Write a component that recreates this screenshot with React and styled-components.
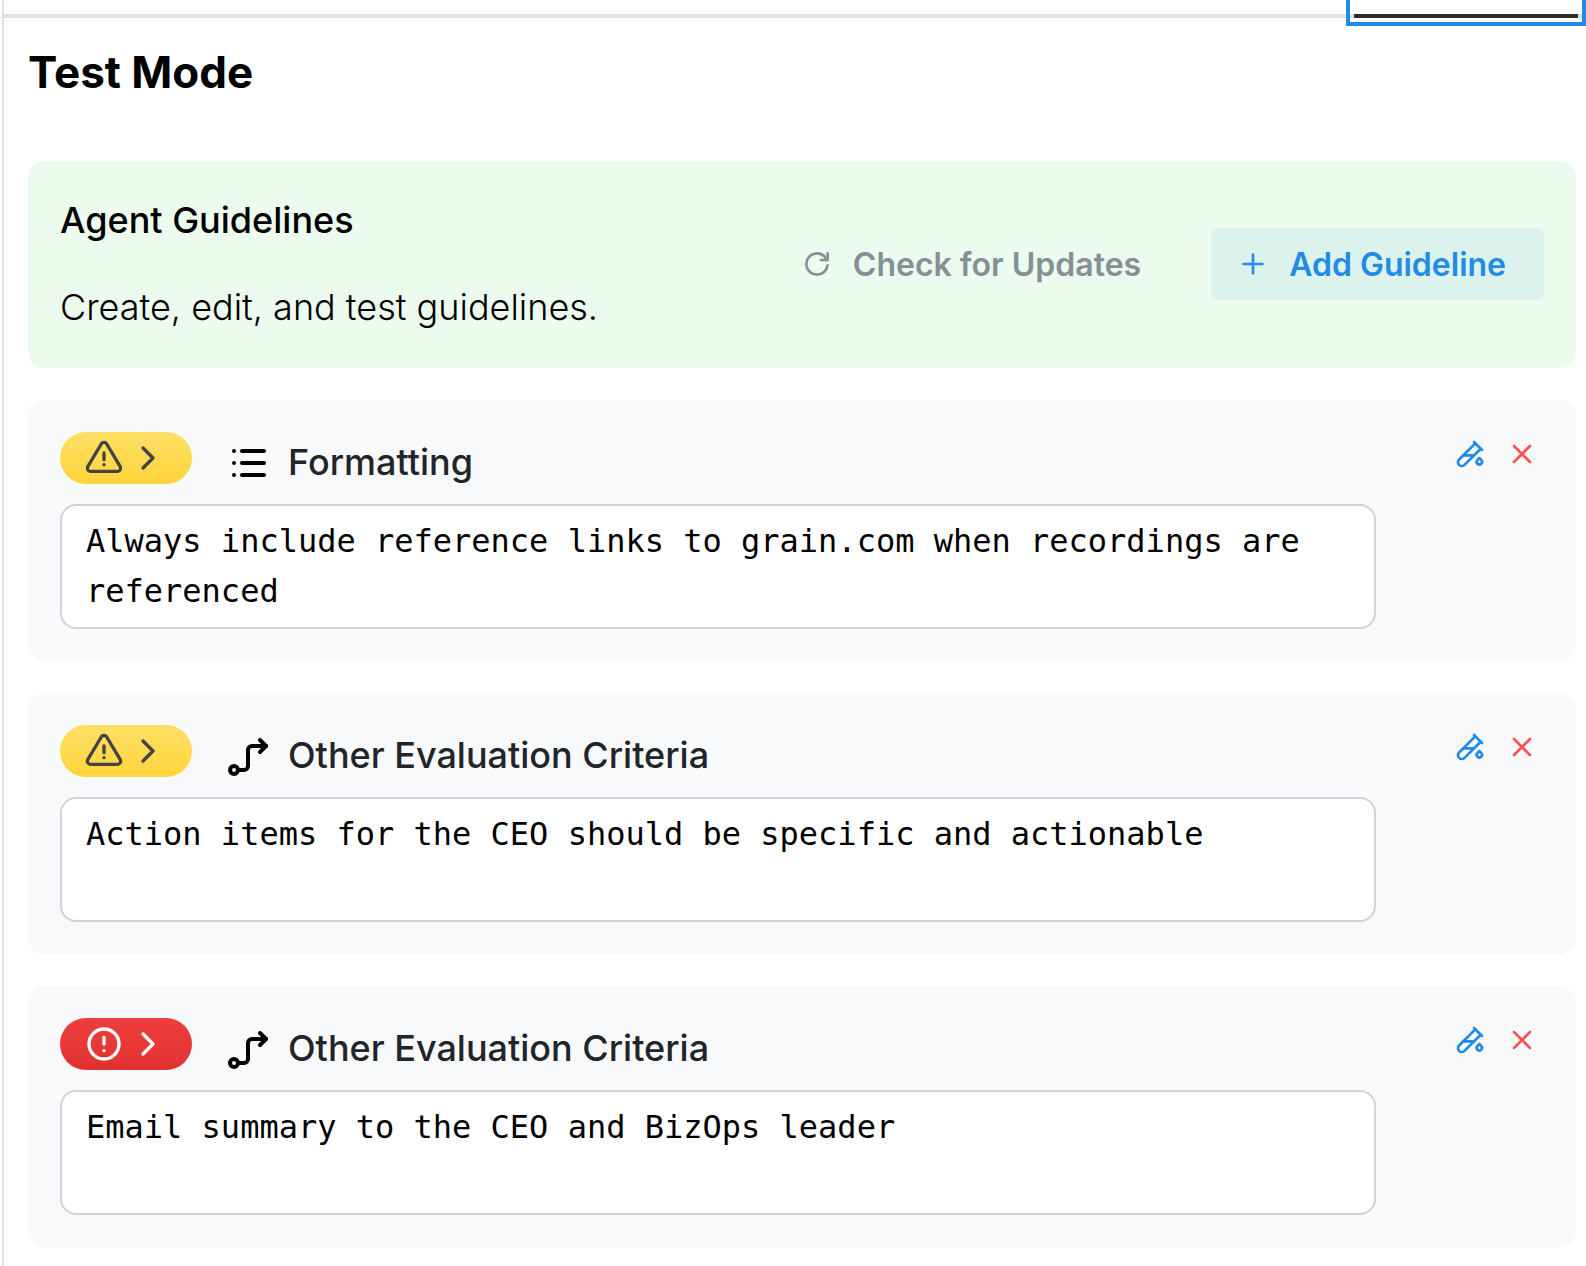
import React from "react";
import styled, { createGlobalStyle, css } from "styled-components";

const GlobalStyle = createGlobalStyle`
  *, *::before, *::after { box-sizing: border-box; }
  body {
    margin: 0;
    background: #fff;
    color: #000;
    font-family: Inter, "Liberation Sans", sans-serif;
  }
  h1, h2, h3, p { margin: 0; }
  button { font-family: inherit; cursor: pointer; }
`;

const Page = styled.div`
  display: flex;
  min-height: 100vh;
`;

const SideEdge = styled.div`
  flex: none;
  width: 2px;
`;

const SideEdgeTop = styled.div`
  height: 18px;
  border-bottom: 1px solid #dee2e6;
`;

const Panel = styled.div`
  flex: 1;
  min-width: 0;
  border-left: 2px solid #dee2e6;
`;

const TabList = styled.div`
  display: flex;
  justify-content: flex-end;
  height: 18px;
  padding-right: 8px;
  border-bottom: 4px solid #dee2e6;
`;

const Tab = styled.button`
  width: 224px;
  height: 18px;
  padding: 0;
  background: #fff;
  border: 0;
  border-bottom: 4px solid #2e2e2e;
  outline: 4px solid #228be6;
  outline-offset: 4px;
`;

const Content = styled.main`
  padding: 24px 10px 16px 24px;
`;

const PageTitle = styled.h1`
  margin-bottom: 59px;
  font-size: 44px;
  font-weight: 700;
  line-height: 60px;
`;

const Stack = styled.div`
  display: flex;
  flex-direction: column;
  gap: 32px;
`;

const Banner = styled.section`
  display: flex;
  align-items: center;
  justify-content: space-between;
  padding: 32px 32px 33px;
  border-radius: 16px;
  background: #ebfbee;
`;

const BannerText = styled.div`
  display: flex;
  flex-direction: column;
  gap: 32px;
  font-size: 36px;
  line-height: 55px;
`;

const BannerTitle = styled.h2`
  font-size: 36px;
  font-weight: 500;
`;

const BannerDescription = styled.p`
  font-weight: 300;
`;

const ButtonGroup = styled.div`
  display: flex;
  gap: 32px;
`;

const Button = styled.button`
  display: flex;
  align-items: center;
  gap: 20px;
  height: 72px;
  padding: 0 38px 0 26px;
  border: 0;
  border-radius: 8px;
  font-size: 32px;
  font-weight: 600;
  white-space: nowrap;
  ${({ $variant }) =>
    $variant === "light"
      ? css`
          background: rgba(34, 139, 230, 0.08);
          color: #228be6;
        `
      : css`
          background: transparent;
          color: #868e96;
        `}
`;

const Card = styled.section`
  display: grid;
  grid-template-columns: minmax(0, 1fr) 168px;
  padding: 32px;
  border-radius: 16px;
  background: #f8f9fb;
`;

const CardMain = styled.div`
  display: flex;
  flex-direction: column;
  gap: 10px;
`;

const CardHeader = styled.div`
  display: flex;
  align-items: flex-start;
  gap: 32px;
`;

const StatusPill = styled.button`
  display: flex;
  align-items: center;
  gap: 4px;
  height: 52px;
  padding: 0 24px;
  border: 0;
  border-radius: 26px;
  ${({ $status }) =>
    $status === "error"
      ? css`
          background: linear-gradient(#f03e3e, #e03131);
          color: #fff;
        `
      : css`
          background: linear-gradient(#ffe066, #ffd43b);
          color: #444;
        `}
`;

const Category = styled.div`
  display: flex;
  align-items: center;
  gap: 16px;
  height: 62px;
`;

const CategoryName = styled.label`
  padding-bottom: 2px;
  color: #212529;
  font-size: 36px;
  font-weight: 500;
  line-height: 60px;
`;

const GuidelineInput = styled.textarea`
  display: block;
  width: 100%;
  height: 125px;
  padding: 10px 24px;
  border: 2px solid #ced4da;
  border-radius: 16px;
  background: #fff;
  color: #000;
  font-family: "DejaVu Sans Mono", "Liberation Mono", monospace;
  font-size: 32px;
  line-height: 50px;
  resize: none;
  overflow: hidden;
`;

const Actions = styled.div`
  display: flex;
  justify-content: flex-end;
  align-items: flex-start;
  gap: 8px;
`;

const IconButton = styled.button`
  display: grid;
  place-items: center;
  width: 44px;
  height: 44px;
  padding: 0;
  border: 0;
  background: transparent;
  color: ${({ $color }) => $color};
`;

const iconPaths = {
  reload: [
    "M19.933 13.041a8 8 0 1 1 -9.925 -8.788c3.899 -1 7.935 1.007 9.425 4.747",
    "M20 4v5h-5",
  ],
  plus: ["M12 5v14", "M5 12h14"],
  warning: [
    "M12 9v4",
    "M10.363 3.591l-8.106 13.534a1.914 1.914 0 0 0 1.636 2.871h16.214a1.914 1.914 0 0 0 1.636 -2.87l-8.106 -13.536a1.914 1.914 0 0 0 -3.274 0z",
    "M12 16h.01",
  ],
  error: ["M3 12a9 9 0 1 0 18 0a9 9 0 0 0 -18 0", "M12 8v4", "M12 16h.01"],
  chevron: ["M9 6l6 6l-6 6"],
  list: ["M9 6h11", "M9 12h11", "M9 18h11", "M5 6v.01", "M5 12v.01", "M5 18v.01"],
  route: [
    "M3 19a2 2 0 1 0 4 0a2 2 0 0 0 -4 0",
    "M7 19h3a2 2 0 0 0 2 -2v-8a2 2 0 0 1 2 -2h7",
    "M18 4l3 3l-3 3",
  ],
  testTube: [
    "M20 8.04l-12.122 12.124a2.857 2.857 0 1 1 -4.041 -4.04l12.122 -12.124",
    "M7 13h8",
    "M19 15l1.5 1.6a2 2 0 1 1 -3 0l1.5 -1.6z",
    "M15 3l6 6",
  ],
  close: ["M18 6l-12 12", "M6 6l12 12"],
};

function Icon({ name, size = 32 }) {
  return (
    <svg
      width={size}
      height={size}
      viewBox="0 0 24 24"
      fill="none"
      stroke="currentColor"
      strokeWidth="2"
      strokeLinecap="round"
      strokeLinejoin="round"
      aria-hidden="true"
    >
      {iconPaths[name].map((d) => (
        <path key={d} d={d} />
      ))}
    </svg>
  );
}

const guidelines = [
  {
    id: "guideline-1",
    status: "warning",
    icon: "list",
    category: "Formatting",
    text: "Always include reference links to grain.com when recordings are referenced",
  },
  {
    id: "guideline-2",
    status: "warning",
    icon: "route",
    category: "Other Evaluation Criteria",
    text: "Action items for the CEO should be specific and actionable",
  },
  {
    id: "guideline-3",
    status: "error",
    icon: "route",
    category: "Other Evaluation Criteria",
    text: "Email summary to the CEO and BizOps leader",
  },
];

function GuidelineCard({ id, status, icon, category, text }) {
  return (
    <Card>
      <CardMain>
        <CardHeader>
          <StatusPill type="button" $status={status} aria-label={`Show ${status}`}>
            <Icon name={status} size={40} />
            <Icon name="chevron" size={40} />
          </StatusPill>
          <Category>
            <Icon name={icon} size={48} />
            <CategoryName htmlFor={id}>{category}</CategoryName>
          </Category>
        </CardHeader>
        <GuidelineInput id={id} defaultValue={text} spellCheck={false} />
      </CardMain>
      <Actions>
        <IconButton type="button" $color="#228be6" aria-label="Test guideline">
          <Icon name="testTube" />
        </IconButton>
        <IconButton type="button" $color="#fa5252" aria-label="Remove guideline">
          <Icon name="close" />
        </IconButton>
      </Actions>
    </Card>
  );
}

export default function App() {
  return (
    <>
      <GlobalStyle />
      <Page>
        <SideEdge>
          <SideEdgeTop />
        </SideEdge>
        <Panel>
          <TabList role="tablist">
            <Tab type="button" role="tab" aria-selected="true" aria-label="Test Mode" />
          </TabList>
          <Content>
            <PageTitle>Test Mode</PageTitle>
            <Stack>
              <Banner>
                <BannerText>
                  <BannerTitle>Agent Guidelines</BannerTitle>
                  <BannerDescription>Create, edit, and test guidelines.</BannerDescription>
                </BannerText>
                <ButtonGroup>
                  <Button type="button">
                    <Icon name="reload" />
                    Check for Updates
                  </Button>
                  <Button type="button" $variant="light">
                    <Icon name="plus" />
                    Add Guideline
                  </Button>
                </ButtonGroup>
              </Banner>
              {guidelines.map((guideline) => (
                <GuidelineCard key={guideline.id} {...guideline} />
              ))}
            </Stack>
          </Content>
        </Panel>
      </Page>
    </>
  );
}
